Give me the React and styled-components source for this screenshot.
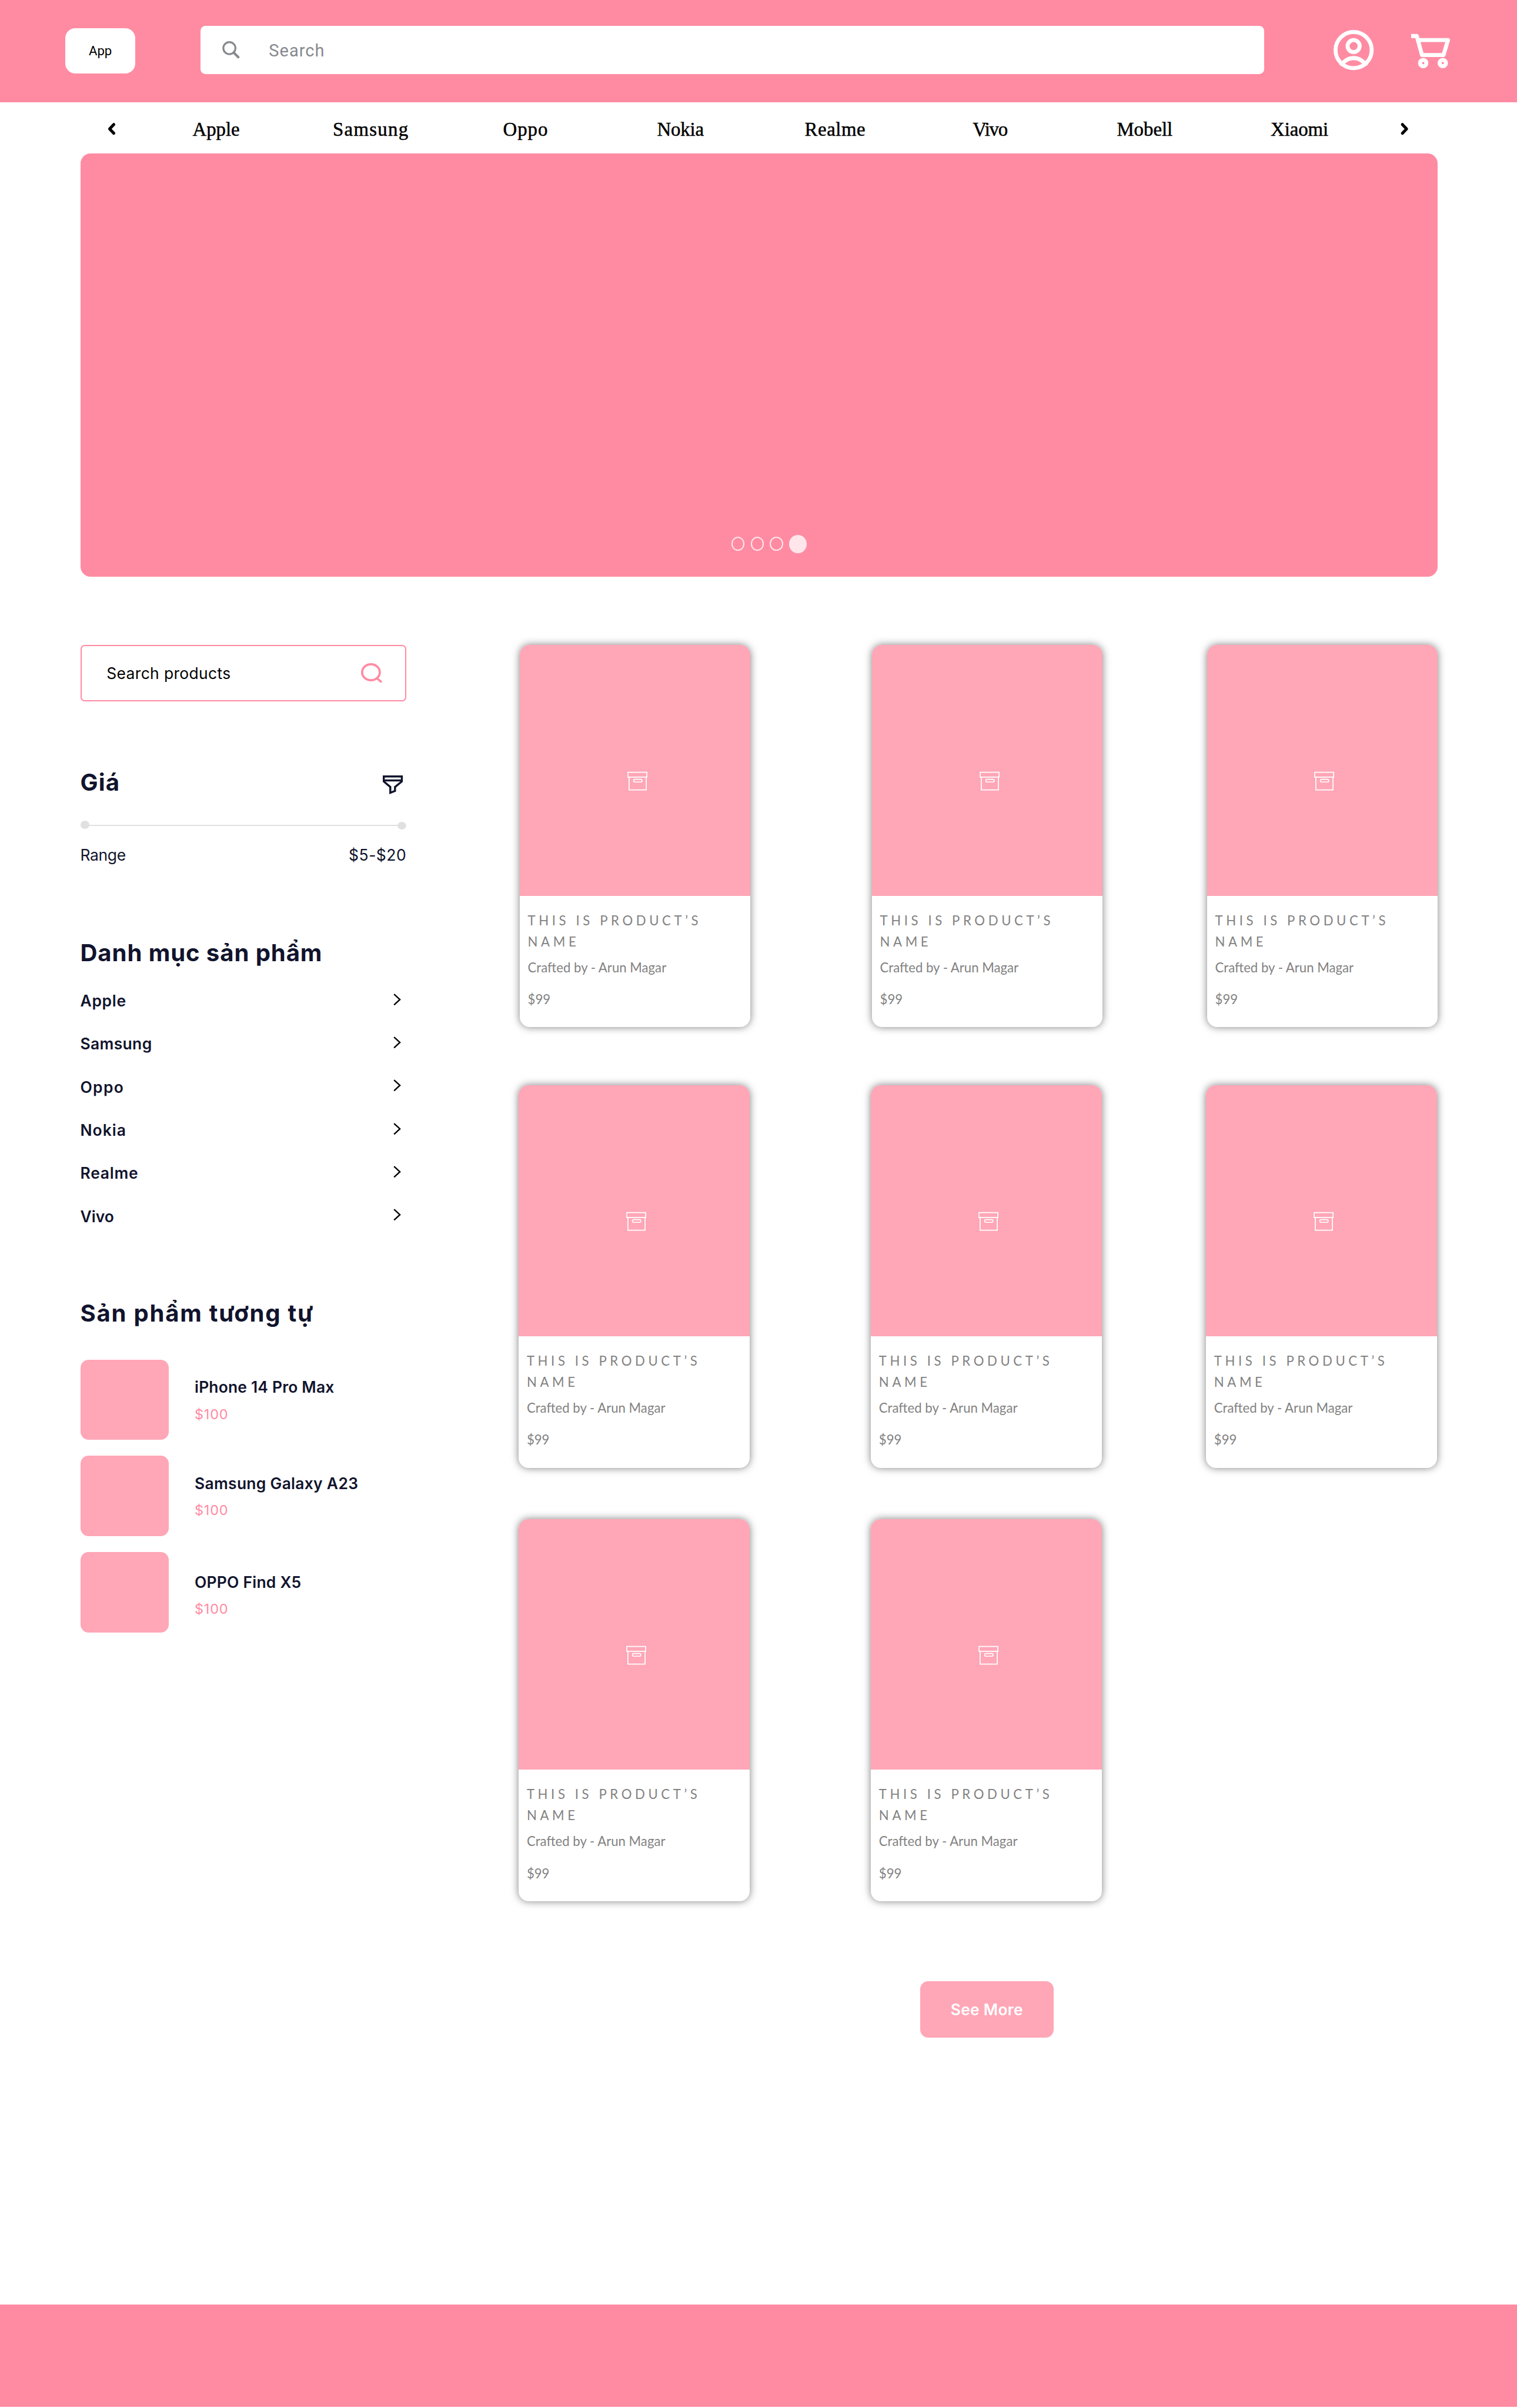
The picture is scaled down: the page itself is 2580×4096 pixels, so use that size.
import React from "react";
import styled, { createGlobalStyle } from "styled-components";

const pink = "#ff8ba3";
const blush = "#ffa6b7";
const ink = "#11142d";
const sans = `Inter, "Open Sans", "Liberation Sans", sans-serif`;

const GlobalStyle = createGlobalStyle`
  html { font-size: 8.5325px; }
  body { margin: 0; background: #fff; }
  *, *::before, *::after { box-sizing: border-box; }
  svg { display: block; flex: none; overflow: visible; }
`;

const Page = styled.div`
  width: 100%;
  height: 480rem;
  display: flex;
  flex-direction: column;
  background: #fff;
  font-family: ${sans};
  overflow: hidden;
`;

/* Header */
const Header = styled.header`
  height: 20.4rem;
  flex: none;
  padding: 5.2rem 0 5.6rem 13rem;
  display: flex;
  align-items: center;
  background: ${pink};
`;

const Brand = styled.button`
  width: 14rem;
  height: 9rem;
  margin: 0.2rem 13rem 0 0;
  padding: 0;
  border: 0;
  border-radius: 2rem;
  background: #fff;
  color: #000;
  font: 400 2.6rem Roboto, sans-serif;
`;

const HeaderSearch = styled.div`
  width: 212rem;
  height: 9.6rem;
  padding-left: 4.3rem;
  display: flex;
  align-items: center;
  border-radius: 1rem;
  background: #fff;
  color: #87898e;
  font: 400 3.4rem Roboto, sans-serif;
  letter-spacing: 0.12rem;
`;

const HeaderSearchLabel = styled.span`
  margin: 0.15rem 0 0 5.8rem;
`;

const HeaderIcons = styled.div`
  display: flex;
  gap: 7.5rem;
  margin-left: 13.8rem;
`;

/* Brand navigation */
const BrandNav = styled.nav`
  height: 10.2rem;
  flex: none;
  padding: 0.4rem 0 0 21.5rem;
  display: flex;
  align-items: center;
`;

const BrandList = styled.div`
  display: grid;
  grid-template-columns: repeat(8, 30.85rem);
  margin: 0.24rem 4.75rem 0 4.55rem;
`;

const BrandLink = styled.a`
  text-align: center;
  color: #000;
  font: 400 3.85rem/1.2 "Liberation Serif", serif;
  letter-spacing: ${(p) => p.$track}rem;
  -webkit-text-stroke: 0.06rem #000;
`;

/* Banner */
const Banner = styled.section`
  width: 270.6rem;
  height: 84.4rem;
  flex: none;
  margin-left: 16rem;
  padding: 0 0 4.7rem 129.8rem;
  display: flex;
  align-items: flex-end;
  border-radius: 2rem;
  background: ${pink};
`;

const Dots = styled.div`
  display: flex;
  align-items: center;
  gap: 1.2rem;
`;

const Dot = styled.span`
  width: ${(p) => (p.$active ? 3.5 : 2.63)}rem;
  height: ${(p) => (p.$active ? 3.7 : 2.8)}rem;
  border: 2px solid #ffe6ea;
  border-radius: 50%;
  background: ${(p) => (p.$active ? "#ffe6ea" : "transparent")};
`;

/* Body */
const Main = styled.main`
  height: 344.4rem;
  flex: none;
  padding: 13.6rem 0 0 16rem;
  display: flex;
  align-items: flex-start;
`;

const Sidebar = styled.aside`
  width: 65rem;
  flex: none;
  display: flex;
  flex-direction: column;
  color: ${ink};
`;

const SearchBox = styled.div`
  height: 11.2rem;
  padding: 0 4.5rem 0 5rem;
  display: flex;
  align-items: center;
  justify-content: space-between;
  border: 2px solid ${pink};
  border-radius: 0.8rem;
  color: #000;
  font-size: 3.1rem;
  letter-spacing: 0.043rem;
`;

const Heading = styled.h2`
  margin: 0;
  font: 700 4.7rem/6rem ${sans};
  letter-spacing: ${(p) => p.$track}rem;
  white-space: nowrap;
`;

const PriceHead = styled.div`
  display: flex;
  align-items: center;
  justify-content: space-between;
  margin-top: 13.13rem;
  padding-right: 0.7rem;

  svg { margin-top: 1rem; }
`;

const Slider = styled.div`
  height: 1.8rem;
  margin-top: 4.67rem;
  display: flex;
  align-items: center;
`;

const Track = styled.span`
  flex: 1;
  height: 2px;
  background: #e0e0e0;
`;

const Knob = styled.span`
  width: 1.8rem;
  height: 1.6rem;
  align-self: ${(p) => p.$side};
  border-radius: 50%;
  background: #e0e0e0;
`;

const RangeRow = styled.div`
  display: flex;
  justify-content: space-between;
  margin-top: 3.07rem;
  font-size: 3.1rem;
  line-height: 4rem;
`;

const RangeText = styled.span`
  letter-spacing: ${(p) => p.$track}rem;
`;

const Categories = styled.section`
  margin-top: 14.46rem;
`;

const CategoryList = styled.ul`
  list-style: none;
  margin: 2.24rem 0 0;
  padding: 0;
`;

const CategoryRow = styled.li`
  height: 8.6rem;
  padding-right: 1.1rem;
  display: flex;
  align-items: center;
  justify-content: space-between;
  font-size: 3.1rem;
  font-weight: 600;
  letter-spacing: ${(p) => p.$track}rem;

  svg { margin-bottom: 0.5rem; }
`;

const Related = styled.section`
  margin-top: 11.96rem;
`;

const RelatedList = styled.div`
  display: flex;
  flex-direction: column;
  gap: 3.2rem;
  margin-top: 6.32rem;
`;

const RelatedItem = styled.div`
  display: flex;
  gap: 5.2rem;
`;

const Thumb = styled.div`
  width: 17.6rem;
  height: 16rem;
  flex: none;
  border-radius: 1.6rem;
  background: ${blush};
`;

const RelatedText = styled.div`
  padding-top: ${(p) => p.$top}rem;
  line-height: 4rem;
  white-space: nowrap;
`;

const RelatedName = styled.div`
  font-size: 3.1rem;
  font-weight: 600;
  letter-spacing: ${(p) => p.$track}rem;
`;

const RelatedPrice = styled.div`
  margin-top: 1.4rem;
  color: ${pink};
  font-size: 2.75rem;
  letter-spacing: 0.09rem;
`;

/* Products */
const Products = styled.section`
  margin-left: 22.4rem;
  display: flex;
  flex-direction: column;
`;

const ProductRow = styled.div`
  display: grid;
  grid-template-columns: 70.2rem 66.8rem 46rem;
  margin: 0 0 ${(p) => p.$after}rem ${(p) => p.$indent}rem;
`;

const Card = styled.article`
  width: 46rem;
  height: 76.2rem;
  border-radius: 2rem;
  overflow: hidden;
  background: #fff;
  color: #828282;
  font: 400 2.6rem/4.2rem Lato, "Liberation Sans", sans-serif;
  box-shadow: 0 0 1.6rem rgba(0, 0, 0, 0.5);
`;

const CardImage = styled.div`
  height: 50rem;
  padding: 25.2rem 0 0 21.4rem;
  background: ${blush};
`;

const CardBody = styled.div`
  padding: 2.8rem 0 0 1.6rem;
`;

const CardTitle = styled.h3`
  width: 38rem;
  margin: 0;
  font: inherit;
  letter-spacing: 0.655rem;
`;

const CardMaker = styled.p`
  margin: 0.98rem 0 0;
`;

const CardPrice = styled.p`
  margin: 2.18rem 0 0;
`;

const SeeMore = styled.button`
  width: 26.6rem;
  height: 11.2rem;
  margin: 16rem 0 0 80rem;
  padding: 0;
  border: 0;
  border-radius: 1.6rem;
  background: ${blush};
  color: #fff;
  font: 600 3.1rem ${sans};
  letter-spacing: 0.03rem;
`;

const Footer = styled.footer`
  height: 20.4rem;
  flex: none;
  background: ${pink};
`;

/* Icons: each viewBox unit is a tenth of a rem */
const Icon = styled.svg`
  width: ${(p) => p.$w / 10}rem;
  height: ${(p) => p.$h / 10}rem;
  fill: none;
  stroke: ${(p) => p.$color};
  stroke-width: ${(p) => p.$line};
`;

const Glyph = ({ w, h, color, line, children }) => (
  <Icon viewBox={`0 0 ${w} ${h}`} $w={w} $h={h} $color={color} $line={line}>
    {children}
  </Icon>
);

const HeaderSearchIcon = () => (
  <Glyph w={35} h={35} color="#87898e" line={3.8}>
    <circle cx="14.2" cy="14" r="12" />
    <path d="M22.8 22.8L32 32" strokeWidth="4.8" strokeLinecap="round" />
  </Glyph>
);

const UserIcon = () => (
  <Glyph w={80} h={80} color="#fff" line={8}>
    <circle cx="40" cy="40" r="36" />
    <circle cx="40" cy="32" r="12" />
    <path d="M15 71.4A28 28 0 0 1 65 71.4" />
  </Glyph>
);

const CartIcon = () => (
  <Glyph w={78} h={80} color="#fff" line={8}>
    <path d="M0 12H11.2L21.6 50H64.4L73.4 20H13.5" strokeLinejoin="round" />
    <circle cx="24" cy="66" r="6.3" />
    <circle cx="63" cy="66" r="6.3" />
  </Glyph>
);

const NavChevron = ({ right }) => (
  <Glyph w={16} h={24} color="#000" line={5.8}>
    <path
      d={right ? "M3.6 3.2L12 12L3.6 20.8" : "M12.4 3.2L4 12L12.4 20.8"}
      strokeLinecap="round"
      strokeLinejoin="round"
    />
  </Glyph>
);

const PinkSearchIcon = () => (
  <Glyph w={43} h={40} color={pink} line={4.4}>
    <ellipse cx="19.8" cy="18.2" rx="17.6" ry="16" />
    <path d="M31.5 30L41 38" />
  </Glyph>
);

const FilterIcon = () => (
  <Glyph w={40} h={37} color={ink} line={4}>
    <path d="M2 2H38V12L24.4 23V31L15 34.6V23L2 12Z" />
    <path d="M2 10H38" />
  </Glyph>
);

const ChevronIcon = () => (
  <Glyph w={15} h={24} color="#000" line={2.8}>
    <path d="M1.4 1.4L13 12L1.4 22.6" />
  </Glyph>
);

const BoxIcon = () => (
  <Glyph w={40} h={38} color="#fff" line={2}>
    <path d="M1.2 2H38.8V11.6H1.2Z" />
    <path d="M3.4 11.6V37H37.6V11.6" />
    <rect x="12.4" y="16" width="16.8" height="5.4" rx="2.7" />
  </Glyph>
);

const brands = [
  ["Apple", -0.005],
  ["Samsung", 0.15],
  ["Oppo", 0.11],
  ["Nokia", -0.02],
  ["Realme", 0.065],
  ["Vivo", -0.14],
  ["Mobell", 0],
  ["Xiaomi", -0.01],
];

const categories = [
  ["Apple", 0.08],
  ["Samsung", 0.04],
  ["Oppo", 0.15],
  ["Nokia", 0.12],
  ["Realme", 0.09],
  ["Vivo", 0],
];

const related = [
  { name: "iPhone 14 Pro Max", price: "$100", track: 0.02, top: 3.5 },
  { name: "Samsung Galaxy A23", price: "$100", track: 0.033, top: 3.5 },
  { name: "OPPO Find X5", price: "$100", track: 0.025, top: 3.9 },
];

const rows = [
  { count: 3, after: 11.6, indent: 0.2 },
  { count: 3, after: 10.2, indent: 0 },
  { count: 2, after: 0, indent: 0 },
];

const ProductCard = () => (
  <Card>
    <CardImage>
      <BoxIcon />
    </CardImage>
    <CardBody>
      <CardTitle>THIS IS PRODUCT’S NAME</CardTitle>
      <CardMaker>Crafted by - Arun Magar</CardMaker>
      <CardPrice>$99</CardPrice>
    </CardBody>
  </Card>
);

export default function App() {
  return (
    <Page>
      <GlobalStyle />
      <Header>
        <Brand>App</Brand>
        <HeaderSearch>
          <HeaderSearchIcon />
          <HeaderSearchLabel>Search</HeaderSearchLabel>
        </HeaderSearch>
        <HeaderIcons>
          <UserIcon />
          <CartIcon />
        </HeaderIcons>
      </Header>

      <BrandNav>
        <NavChevron />
        <BrandList>
          {brands.map(([name, track]) => (
            <BrandLink key={name} $track={track}>
              {name}
            </BrandLink>
          ))}
        </BrandList>
        <NavChevron right />
      </BrandNav>

      <Banner>
        <Dots>
          <Dot />
          <Dot />
          <Dot />
          <Dot $active />
        </Dots>
      </Banner>

      <Main>
        <Sidebar>
          <SearchBox>
            Search products
            <PinkSearchIcon />
          </SearchBox>

          <PriceHead>
            <Heading $track={0.13}>Giá</Heading>
            <FilterIcon />
          </PriceHead>
          <Slider>
            <Knob $side="flex-start" />
            <Track />
            <Knob $side="flex-end" />
          </Slider>
          <RangeRow>
            <RangeText $track={-0.04}>Range</RangeText>
            <RangeText $track={0.06}>$5-$20</RangeText>
          </RangeRow>

          <Categories>
            <Heading $track={0.105}>Danh mục sản phẩm</Heading>
            <CategoryList>
              {categories.map(([name, track]) => (
                <CategoryRow key={name} $track={track}>
                  {name}
                  <ChevronIcon />
                </CategoryRow>
              ))}
            </CategoryList>
          </Categories>

          <Related>
            <Heading $track={0.205}>Sản phẩm tương tự</Heading>
            <RelatedList>
              {related.map((item) => (
                <RelatedItem key={item.name}>
                  <Thumb />
                  <RelatedText $top={item.top}>
                    <RelatedName $track={item.track}>{item.name}</RelatedName>
                    <RelatedPrice>{item.price}</RelatedPrice>
                  </RelatedText>
                </RelatedItem>
              ))}
            </RelatedList>
          </Related>
        </Sidebar>

        <Products>
          {rows.map((row, r) => (
            <ProductRow key={r} $after={row.after} $indent={row.indent}>
              {Array.from({ length: row.count }, (_, c) => (
                <ProductCard key={c} />
              ))}
            </ProductRow>
          ))}
          <SeeMore>See More</SeeMore>
        </Products>
      </Main>

      <Footer />
    </Page>
  );
}
